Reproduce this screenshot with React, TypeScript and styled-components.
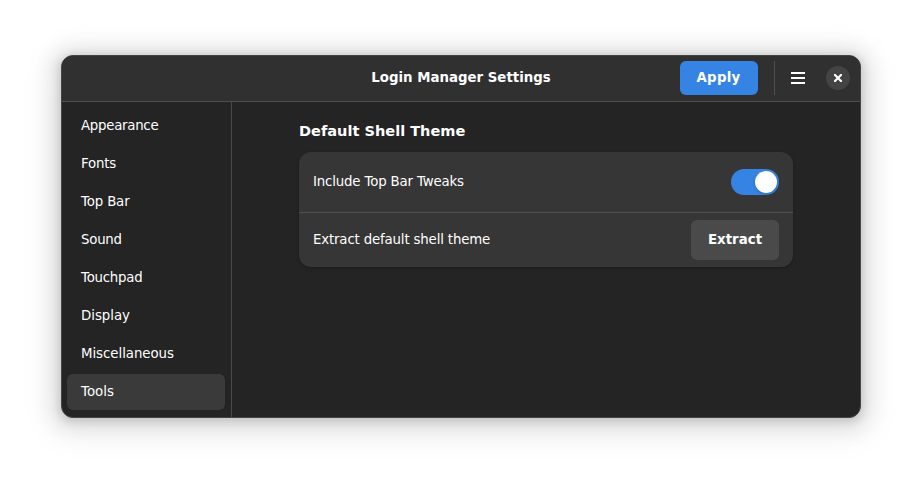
import React from "react";
import styled, { createGlobalStyle } from "styled-components";

const Global = createGlobalStyle`
  * { box-sizing: border-box; }
  body { margin: 0; background: #fff; }
  button { border: 0; padding: 0; font: inherit; color: inherit; }
`;
const Desktop = styled.main`
  width: 922px; height: 485px; padding: 55px 61px 67px; overflow: hidden;
  font: 13.333px/18px "DejaVu Sans", sans-serif; color: #fff;
`;
const Window = styled.div`
  width: 800px; height: 363px; border-radius: 12px; background: #242424; overflow: hidden;
  box-shadow: 0 2px 8px 2px rgba(0,0,0,.13), 0 3px 20px 10px rgba(0,0,0,.09), 0 6px 32px 16px rgba(0,0,0,.04);
  border: 1px solid #434444;
`;
const Header = styled.header`
  height: 46px; display: grid; grid-template-columns: 1fr auto 1fr; align-items: center;
  padding-bottom: 1px; background: #303030; border-bottom: 1px solid #4f4f4f;
`;
const Title = styled.h1`
  grid-column: 2; margin: 0; padding-bottom: 1px; font-size: 13.333px; line-height: 18px; font-weight: 700;
`;
const Controls = styled.div`
  display: flex; align-items: center; justify-content: flex-end; padding: 0 10px 1px 0;
`;
const Button = styled.button<{ $suggested?: boolean }>`
  width: ${p => p.$suggested ? 78 : 88}px; height: ${p => p.$suggested ? 34 : 40}px;
  padding-right: ${p => p.$suggested ? 1 : 0}px;
  border-radius: 6px; background: ${p => p.$suggested ? "#3584e4" : "#4a4a4a"};
  font-weight: 700; letter-spacing: ${p => p.$suggested ? .25 : .03}px;
`;
const Separator = styled.div`
  width: 1px; height: 34px; margin: 0 16px; background: #4f4f4f;
`;
const MenuIcon = styled.svg`width: 14px; height: 12px; display: block;`;
const Close = styled.button`
  width: 24px; height: 24px; margin-left: 21px; border-radius: 50%; background: #444;
  display: grid; place-items: center;
`;
const Body = styled.div`display: flex; height: 315px;`;
const Sidebar = styled.nav`
  width: 170px; padding: 6px 6px 0 5px; border-right: 1px solid #4a4a4a;
  display: flex; flex-direction: column; gap: 2px;
`;
const NavItem = styled.a<{ $active?: boolean; $tracking: number }>`
  height: 36px; padding: 9px 14px; border-radius: 6px; background: ${p => p.$active ? "#3a3a3a" : "none"};
  letter-spacing: ${p => p.$tracking}px;
`;
const Content = styled.section`flex: 1; padding: 20px 67px 0;`;
const Heading = styled.h2`
  margin: 0 0 12px; font-size: 14.55px; line-height: 18px; font-weight: 700;
`;
const Card = styled.div`
  height: 115px; border-radius: 12px; background: #363636; box-shadow: 0 1px 3px rgba(0,0,0,.25);
`;
const Row = styled.div<{ $divided?: boolean }>`
  height: ${p => p.$divided ? 61 : 54}px; padding: 0 14px; display: flex;
  align-items: center; justify-content: space-between;
  border-bottom: ${p => p.$divided ? "1px solid #505050" : "0"};
`;
const RowLabel = styled.span`padding-bottom: 1px; letter-spacing: -.16px;`;
const Switch = styled.button`
  width: 48px; height: 26px; padding: 2px; border-radius: 13px; background: #3584e4;
  display: flex; justify-content: flex-end;
`;
const Knob = styled.span`
  width: 22px; height: 22px; border-radius: 50%; background: white; box-shadow: 0 1px 3px rgba(0,0,0,.2);
`;

const sections = [
  { name: "Appearance", tracking: -.27 },
  { name: "Fonts", tracking: -.18 },
  { name: "Top Bar", tracking: -.15 },
  { name: "Sound", tracking: -.24 },
  { name: "Touchpad", tracking: -.24 },
  { name: "Display", tracking: -.02 },
  { name: "Miscellaneous", tracking: -.04 },
  { name: "Tools", tracking: 0 },
];

export default function App() {
  return <><Global /><Desktop><Window>
    <Header><Title>Login Manager Settings</Title><Controls>
      <Button $suggested>Apply</Button><Separator />
      <MenuIcon viewBox="0 0 14 12" aria-label="Menu"><path d="M0 1h14M0 6h14M0 11h14" stroke="white" strokeWidth="2" /></MenuIcon>
      <Close aria-label="Close"><svg width="8" height="8" viewBox="0 0 8 8"><path d="M.8.8 7.2 7.2M7.2.8.8 7.2" stroke="white" strokeWidth="2.1" strokeLinecap="square" /></svg></Close>
    </Controls></Header>
    <Body><Sidebar>{sections.map(({ name, tracking }) => <NavItem key={name} $active={name === "Tools"} $tracking={tracking}>{name}</NavItem>)}</Sidebar>
      <Content><Heading>Default Shell Theme</Heading><Card>
        <Row $divided><RowLabel>Include Top Bar Tweaks</RowLabel><Switch role="switch" aria-checked="true" aria-label="Include Top Bar Tweaks"><Knob /></Switch></Row>
        <Row><RowLabel>Extract default shell theme</RowLabel><Button>Extract</Button></Row>
      </Card></Content>
    </Body>
  </Window></Desktop></>;
}
